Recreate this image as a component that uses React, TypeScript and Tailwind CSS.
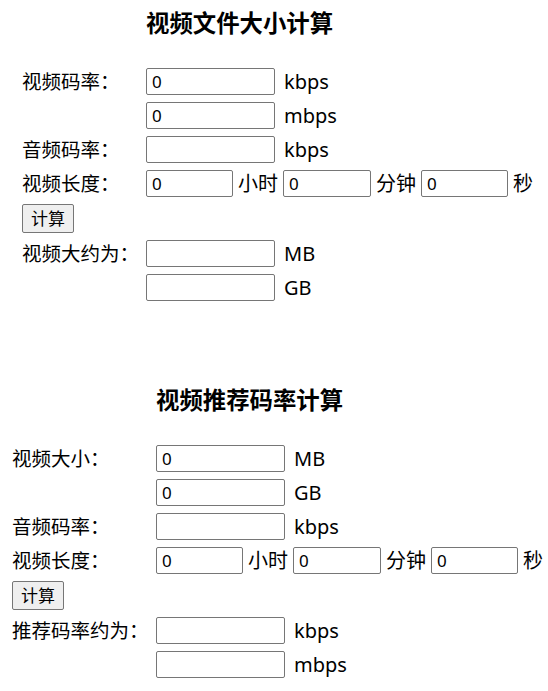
import React from 'react';

type Row =
  | { kind: 'field'; label?: string; value?: string; unit: string }
  | { kind: 'time'; label: string }
  | { kind: 'button' };

const inputCls =
  'h-[27px] border border-[#767676] rounded-[2px] bg-white px-[5px] text-[17px] text-black outline-none';

function Section({ title, wide, rows }: { title: string; wide: boolean; rows: Row[] }) {
  const labelWidth = wide ? 'w-[144px]' : 'w-[124px]';
  return (
    <section className={wide ? 'pl-[12px]' : 'pl-[22px]'}>
      <h3 className={`${wide ? 'pl-[144px]' : 'pl-[124px]'} h-[27px] leading-[27px] text-[23.4px] font-bold text-black`}>
        {title}
      </h3>
      <div className="mt-[31px] flex flex-col gap-[7px]">
        {rows.map((row, i) => {
          if (row.kind === 'button') {
            return (
              <div key={i} className="flex">
                <button className="h-[29px] w-[52px] border border-[#767676] rounded-[2px] bg-[#efefef] text-[17px] text-black leading-none">
                  计算
                </button>
              </div>
            );
          }
          return (
            <div key={i} className="flex items-center h-[27px]">
              <div className={`${labelWidth} shrink-0 text-[19.5px] text-black`}>{row.label}</div>
              {row.kind === 'field' ? (
                <div className="flex items-center gap-[9px]">
                  <input className={`${inputCls} w-[129px]`} defaultValue={row.value} />
                  <span className="text-[20px] text-black">{row.unit}</span>
                </div>
              ) : (
                <div className="flex items-center gap-[5px] text-[20px] text-black">
                  <input className={`${inputCls} w-[87px]`} defaultValue="0" />
                  <span>小时</span>
                  <input className={`${inputCls} w-[88px]`} defaultValue="0" />
                  <span>分钟</span>
                  <input className={`${inputCls} w-[87px]`} defaultValue="0" />
                  <span>秒</span>
                </div>
              )}
            </div>
          );
        })}
      </div>
    </section>
  );
}

export default function App() {
  return (
    <div
      className="w-[548px] h-[691px] bg-white pt-[10px] overflow-hidden"
      style={{ fontFamily: '"Noto Sans", "Noto Sans CJK SC", sans-serif' }}
    >
      <Section
        title="视频文件大小计算"
        wide={false}
        rows={[
          { kind: 'field', label: '视频码率：', value: '0', unit: 'kbps' },
          { kind: 'field', value: '0', unit: 'mbps' },
          { kind: 'field', label: '音频码率：', unit: 'kbps' },
          { kind: 'time', label: '视频长度：' },
          { kind: 'button' },
          { kind: 'field', label: '视频大约为：', unit: 'MB' },
          { kind: 'field', unit: 'GB' },
        ]}
      />
      <div className="h-[86px]" />
      <Section
        title="视频推荐码率计算"
        wide
        rows={[
          { kind: 'field', label: '视频大小：', value: '0', unit: 'MB' },
          { kind: 'field', value: '0', unit: 'GB' },
          { kind: 'field', label: '音频码率：', unit: 'kbps' },
          { kind: 'time', label: '视频长度：' },
          { kind: 'button' },
          { kind: 'field', label: '推荐码率约为：', unit: 'kbps' },
          { kind: 'field', unit: 'mbps' },
        ]}
      />
    </div>
  );
}
